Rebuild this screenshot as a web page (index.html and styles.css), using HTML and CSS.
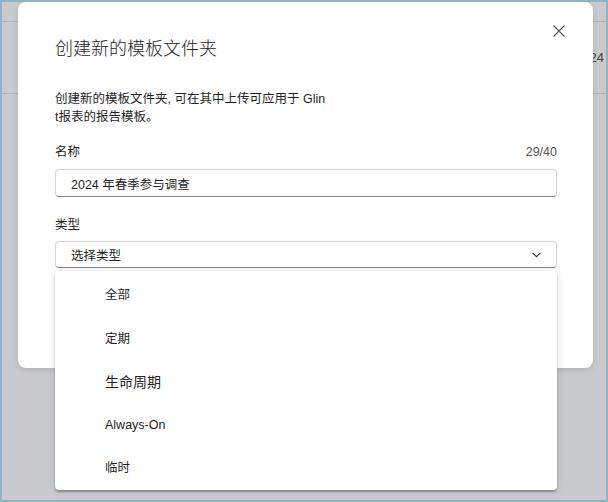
FILE: index.html
```html
<!DOCTYPE html>
<html lang="zh-CN">
<head>
    <meta charset="UTF-8">
    <meta name="viewport" content="width=device-width, initial-scale=1.0">
    <title>创建新的模板文件夹</title>
    <link rel="stylesheet" href="styles.css">
</head>
<body>
    <div class="screen">
        <div class="backdrop">
            <div class="bg-row bg-row-top"></div>
            <div class="bg-row bg-row-main"><span class="bg-num">2024</span></div>
        </div>

        <div class="dialog">
            <button class="close" aria-label="关闭">
                <svg width="12" height="12" viewBox="0 0 12 12">
                    <path d="M0.5 0.5 L11.5 11.5 M11.5 0.5 L0.5 11.5" stroke="#555" stroke-width="1.1" fill="none"/>
                </svg>
            </button>
            <h1 class="title">创建新的模板文件夹</h1>
            <p class="desc">创建新的模板文件夹, 可在其中上传可应用于 Glin<br>t报表的报告模板。</p>

            <div class="field-head name-head">
                <label>名称</label>
                <span class="count">29/40</span>
            </div>
            <div class="input">2024 年春季参与调查</div>

            <div class="field-head type-head">
                <label>类型</label>
            </div>
            <div class="select">
                <span>选择类型</span>
                <svg width="9" height="6" viewBox="0 0 9 6">
                    <path d="M0.6 0.8 L4.5 4.7 L8.4 0.8" stroke="#333" stroke-width="1.1" fill="none"/>
                </svg>
            </div>
        </div>

        <!-- open select menu -->
        <ul class="menu">
            <li>全部</li>
            <li>定期</li>
            <li class="big">生命周期</li>
            <li>Always-On</li>
            <li class="last">临时</li>
        </ul>
    </div>
</body>
</html>
```

FILE: styles.css
```css
body {
    margin: 0;
    font-family: "Liberation Sans", "Noto Sans CJK SC", sans-serif;
    color: #1f1f1f;
}
.screen {
    position: relative;
    width: 608px;
    height: 502px;
    box-sizing: border-box;
    border: 2px solid #93b2c3;
    background-color: #c9cacd;
    overflow: hidden;
}
.bg-row {
    border-bottom: 1px solid #b3b4b7;
    display: flex;
    align-items: center;
    justify-content: flex-end;
}
.bg-row-top {
    height: 19px;
}
.bg-row-main {
    height: 71px;
}
.bg-num {
    font-size: 13px;
    color: #444;
    padding-right: 2px;
}
.dialog {
    position: absolute;
    left: 16px;
    top: 0;
    width: 575px;
    height: 366px;
    box-sizing: border-box;
    padding: 33px 36px 0 37px;
    background-color: #fff;
    border-radius: 8px;
    box-shadow: 0 2px 6px rgba(0, 0, 0, 0.12);
}
.close {
    position: absolute;
    top: 23px;
    right: 28px;
    width: 12px;
    height: 12px;
    padding: 0;
    border: none;
    background: none;
    display: flex;
}
.title {
    margin: 0;
    font-size: 18px;
    line-height: 28px;
    font-weight: 300;
    color: #242424;
}
.desc {
    margin: 27px 0 0;
    font-size: 12.5px;
    line-height: 18px;
}
.field-head {
    display: flex;
    justify-content: space-between;
    font-size: 12.5px;
    line-height: 18px;
}
.name-head {
    margin-top: 17px;
}
.type-head {
    margin-top: 19px;
}
.count {
    color: #555;
}
.input,
.select {
    margin-top: 8px;
    height: 28px;
    box-sizing: border-box;
    padding: 0 15px;
    border: 1px solid #d6d6d6;
    border-bottom-color: #8a8a8a;
    border-radius: 4px;
    font-size: 12.5px;
    display: flex;
    align-items: center;
}
.select {
    margin-top: 7px;
    height: 27px;
    justify-content: space-between;
}
.menu {
    position: absolute;
    left: 53px;
    top: 269px;
    width: 502px;
    height: 219px;
    margin: 0;
    padding: 0;
    list-style: none;
    background-color: #fff;
    border-radius: 4px;
    box-shadow: 0 2px 2px rgba(0, 0, 0, 0.28), 0 0 8px rgba(0, 0, 0, 0.12);
}
.menu li {
    height: 44px;
    padding-left: 50px;
    font-size: 12.5px;
    display: flex;
    align-items: center;
}
.menu li.big {
    font-size: 14px;
}
.menu li.last {
    height: 38px;
}
```
